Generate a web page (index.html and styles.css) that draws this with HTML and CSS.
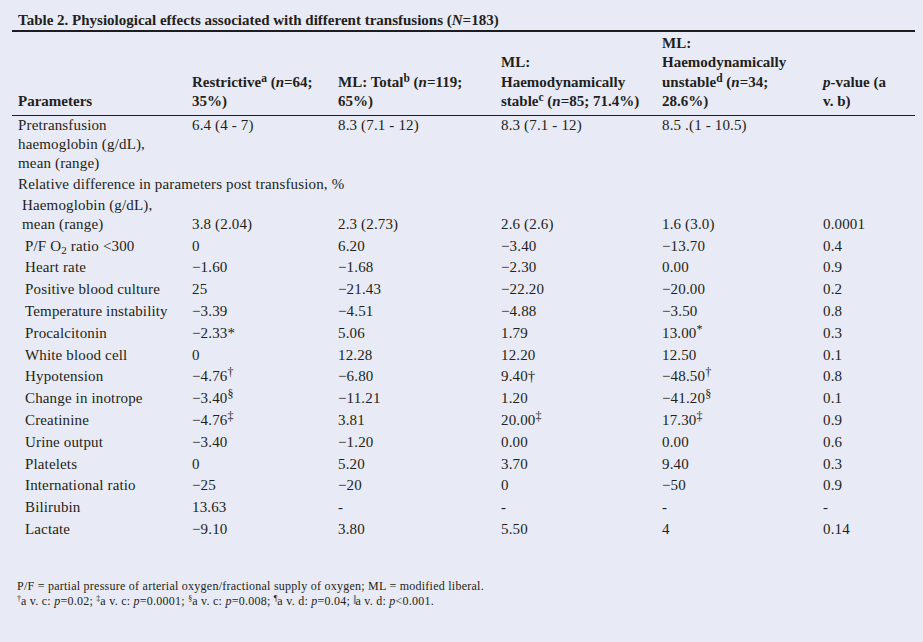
FILE: index.html
```html
<!DOCTYPE html>
<html lang="en">
<head>
<meta charset="utf-8">
<title>Table 2</title>
<link rel="stylesheet" href="styles.css">
</head>
<body>
<div class="sheet">
  <div class="title">Table 2. Physiological effects associated with different transfusions (<i>N</i>=183)</div>
  <table class="data">
    <colgroup>
      <col class="c1"><col class="c2"><col class="c3"><col class="c4"><col class="c5"><col class="c6">
    </colgroup>
    <thead>
      <tr>
        <th>Parameters</th>
        <th>Restrictive<sup>a</sup> (<i>n</i>=64;<br>35%)</th>
        <th>ML: Total<sup>b</sup> (<i>n</i>=119;<br>65%)</th>
        <th>ML:<br>Haemodynamically<br>stable<sup>c</sup> (<i>n</i>=85; 71.4%)</th>
        <th>ML:<br>Haemodynamically<br>unstable<sup>d</sup> (<i>n</i>=34;<br>28.6%)</th>
        <th><i>p</i>-value (a<br>v. b)</th>
      </tr>
    </thead>
    <tbody>
      <tr class="multi top">
        <td>Pretransfusion<br>haemoglobin (g/dL),<br>mean (range)</td>
        <td>6.4 (4 - 7)</td>
        <td>8.3 (7.1 - 12)</td>
        <td>8.3 (7.1 - 12)</td>
        <td>8.5 .(1 - 10.5)</td>
        <td></td>
      </tr>
      <tr class="section">
        <td colspan="6">Relative difference in parameters post transfusion, %</td>
      </tr>
      <tr class="multi bottom">
        <td class="sub1">Haemoglobin (g/dL),<br>mean (range)</td>
        <td>3.8 (2.04)</td>
        <td>2.3 (2.73)</td>
        <td>2.6 (2.6)</td>
        <td>1.6 (3.0)</td>
        <td>0.0001</td>
      </tr>
      <tr class="row first">
        <td class="sub2">P/F O<sub>2</sub> ratio &lt;300</td>
        <td>0</td><td>6.20</td><td>&minus;3.40</td><td>&minus;13.70</td><td>0.4</td>
      </tr>
      <tr class="row">
        <td class="sub2">Heart rate</td>
        <td>&minus;1.60</td><td>&minus;1.68</td><td>&minus;2.30</td><td>0.00</td><td>0.9</td>
      </tr>
      <tr class="row">
        <td class="sub2">Positive blood culture</td>
        <td>25</td><td>&minus;21.43</td><td>&minus;22.20</td><td>&minus;20.00</td><td>0.2</td>
      </tr>
      <tr class="row">
        <td class="sub2">Temperature instability</td>
        <td>&minus;3.39</td><td>&minus;4.51</td><td>&minus;4.88</td><td>&minus;3.50</td><td>0.8</td>
      </tr>
      <tr class="row">
        <td class="sub2">Procalcitonin</td>
        <td>&minus;2.33*</td><td>5.06</td><td>1.79</td><td>13.00<sup class="mk">*</sup></td><td>0.3</td>
      </tr>
      <tr class="row">
        <td class="sub2">White blood cell</td>
        <td>0</td><td>12.28</td><td>12.20</td><td>12.50</td><td>0.1</td>
      </tr>
      <tr class="row">
        <td class="sub2">Hypotension</td>
        <td>&minus;4.76<sup class="mk">&dagger;</sup></td><td>&minus;6.80</td><td>9.40&dagger;</td><td>&minus;48.50<sup class="mk">&dagger;</sup></td><td>0.8</td>
      </tr>
      <tr class="row">
        <td class="sub2">Change in inotrope</td>
        <td>&minus;3.40<sup class="mk">&sect;</sup></td><td>&minus;11.21</td><td>1.20</td><td>&minus;41.20<sup class="mk">&sect;</sup></td><td>0.1</td>
      </tr>
      <tr class="row">
        <td class="sub2">Creatinine</td>
        <td>&minus;4.76<sup class="mk">&Dagger;</sup></td><td>3.81</td><td>20.00<sup class="mk">&Dagger;</sup></td><td>17.30<sup class="mk">&Dagger;</sup></td><td>0.9</td>
      </tr>
      <tr class="row">
        <td class="sub2">Urine output</td>
        <td>&minus;3.40</td><td>&minus;1.20</td><td>0.00</td><td>0.00</td><td>0.6</td>
      </tr>
      <tr class="row">
        <td class="sub2">Platelets</td>
        <td>0</td><td>5.20</td><td>3.70</td><td>9.40</td><td>0.3</td>
      </tr>
      <tr class="row">
        <td class="sub2">International ratio</td>
        <td>&minus;25</td><td>&minus;20</td><td>0</td><td>&minus;50</td><td>0.9</td>
      </tr>
      <tr class="row">
        <td class="sub2">Bilirubin</td>
        <td>13.63</td><td>-</td><td>-</td><td>-</td><td>-</td>
      </tr>
      <tr class="row">
        <td class="sub2">Lactate</td>
        <td>&minus;9.10</td><td>3.80</td><td>5.50</td><td>4</td><td>0.14</td>
      </tr>
    </tbody>
  </table>
  <div class="notes">
    <p>P/F = partial pressure of arterial oxygen/fractional supply of oxygen; ML = modified liberal.</p>
    <p><sup>&dagger;</sup>a v. c: <i>p</i>=0.02; <sup>&Dagger;</sup>a v. c: <i>p</i>=0.0001; <sup>&sect;</sup>a v. c: <i>p</i>=0.008; <sup>&para;</sup>a v. d: <i>p</i>=0.04; <sup class="bars">||</sup>a v. d: <i>p</i>&lt;0.001.</p>
  </div>
</div>
</body>
</html>
```

FILE: styles.css
```css
html, body {
  margin: 0;
  padding: 0;
  background: #e8eaf5;
}

body {
  font-family: "Liberation Serif", "Times New Roman", serif;
  color: #231f20;
  width: 923px;
  height: 642px;
  overflow: hidden;
}

.sheet {
  margin: 0 8px 0 12px;
  padding-top: 10px;
  width: 903px;
}

.title {
  font-size: 15px;
  font-weight: 700;
  line-height: 20px;
  padding-left: 6px;
  border-bottom: 2px solid #1d1d1f;
  white-space: nowrap;
}

.data {
  width: 903px;
  table-layout: fixed;
  border-collapse: collapse;
  border-spacing: 0;
  font-size: 15px;
}

.c1 { width: 174px; }
.c2 { width: 146px; }
.c3 { width: 163px; }
.c4 { width: 161px; }
.c5 { width: 161px; }
.c6 { width: 98px; }

.data th {
  font-weight: 700;
  text-align: left;
  vertical-align: bottom;
  line-height: 19.4px;
  padding: 2px 0 3px 6px;
  white-space: nowrap;
  border-bottom: 1px solid #1d1d1f;
}

.data th sup {
  font-size: 11.5px;
  line-height: 0;
  vertical-align: 5px;
}

.data td {
  padding: 0 0 0 6px;
  text-align: left;
  white-space: nowrap;
  letter-spacing: 0.15px;
}

.multi td {
  line-height: 19.4px;
}

.multi.top td { vertical-align: top; }
.multi.bottom td { vertical-align: bottom; }

.section td {
  line-height: 18px;
  padding-top: 1px;
  padding-bottom: 3px;
  vertical-align: top;
}

.row td {
  line-height: 21.8px;
  vertical-align: top;
}

.row.first td {
  padding-top: 1px;
}

.data td.sub1 { padding-left: 10px; }
.data td.sub2 { padding-left: 13px; }

.data sub {
  font-size: 11px;
  line-height: 0;
  vertical-align: -3px;
}

.data sup.mk {
  font-size: 12px;
  line-height: 0;
  vertical-align: 5px;
  letter-spacing: 0;
}

.notes {
  margin-top: 38px;
  padding-left: 5px;
  font-size: 12px;
  letter-spacing: 0.25px;
  line-height: 15px;
}

.notes p {
  margin: 0;
  white-space: nowrap;
}

.notes sup {
  font-size: 8px;
  line-height: 0;
  vertical-align: 4px;
  letter-spacing: 0;
}

.notes sup.bars {
  font-size: 10px;
  letter-spacing: -1px;
  vertical-align: 3px;
}
```
